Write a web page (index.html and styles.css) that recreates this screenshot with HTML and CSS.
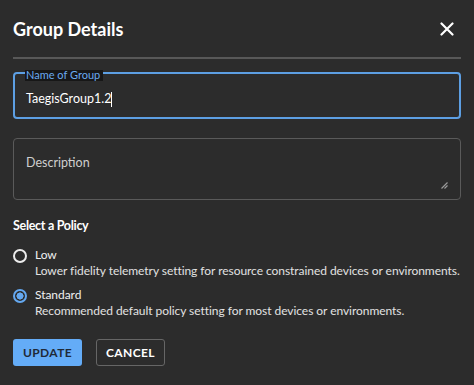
FILE: index.html
```html
<!DOCTYPE html>
<html lang="en">
<head>
    <meta charset="UTF-8">
    <meta name="viewport" content="width=device-width, initial-scale=1.0">
    <title>Group Details</title>
    <link rel="stylesheet" href="styles.css">
</head>
<body>
    <div class="dialog">
        <div class="dialog-header">
            <h2>Group Details</h2>
            <button class="close-button" aria-label="Close">
                <svg width="14" height="14" viewBox="0 0 14 14"><path d="M1.5 1.5 L12.5 12.5 M12.5 1.5 L1.5 12.5" stroke="#fff" stroke-width="2.2" stroke-linecap="round"/></svg>
            </button>
        </div>
        <hr class="divider">

        <div class="field field-focused">
            <span class="field-label">Name of Group</span>
            <div class="field-value">TaegisGroup1.2<span class="caret"></span></div>
        </div>

        <div class="field field-area">
            <span class="placeholder">Description</span>
            <svg class="resize" width="7" height="7" viewBox="0 0 7 7"><path d="M0.5 6.5 L6.5 0.5 M3.5 6.5 L6.5 3.5" stroke="#9a9a9a" stroke-width="1.2"/></svg>
        </div>

        <h3>Select a Policy</h3>
        <label class="option">
            <span class="radio"></span>
            <span class="option-text">
                <span class="option-title">Low</span>
                <span class="option-desc">Lower fidelity telemetry setting for resource constrained devices or environments.</span>
            </span>
        </label>
        <label class="option">
            <span class="radio radio-checked"></span>
            <span class="option-text">
                <span class="option-title">Standard</span>
                <span class="option-desc">Recommended default policy setting for most devices or environments.</span>
            </span>
        </label>

        <div class="actions">
            <button class="btn btn-primary">UPDATE</button>
            <button class="btn btn-outline">CANCEL</button>
        </div>
    </div>
</body>
</html>
```

FILE: styles.css
```css
body {
    margin: 0;
    background-color: #2c2c2c;
    font-family: Lato, "Noto Sans", sans-serif;
    color: #e6e6e6;
    overflow: hidden;
}
.dialog {
    padding: 0 13px;
}
.dialog-header {
    display: flex;
    align-items: center;
    justify-content: space-between;
    height: 57px;
}
.dialog-header h2 {
    margin: 0;
    font-size: 18px;
    font-weight: 700;
    color: #fff;
}
.close-button {
    background: none;
    border: none;
    padding: 0;
    margin-right: 7px;
    display: flex;
    cursor: pointer;
}
.divider {
    margin: 0;
    border: none;
    border-top: 2px solid #585858;
}
.field {
    position: relative;
    border: 1px solid #5a5a5a;
    border-radius: 4px;
    box-sizing: border-box;
}
.field-focused {
    margin-top: 13px;
    height: 47px;
    border: 2px solid #5d9fe3;
    padding: 17px 11px 0;
}
.field-label {
    position: absolute;
    top: -4px;
    left: 10px;
    font-size: 11px;
    line-height: 10px;
    color: #6aaaf0;
    background-color: #171717;
    padding: 0 3px 1px 1px;
}
.field-value {
    font-size: 12.5px;
    line-height: 16px;
    color: #fff;
    display: flex;
    align-items: center;
}
.caret {
    display: inline-block;
    width: 1px;
    height: 15px;
    background-color: #fff;
}
.field-area {
    margin-top: 19px;
    height: 62px;
    padding: 12px 12px 0;
}
.placeholder {
    font-size: 12.5px;
    line-height: 16px;
    color: #cfcfcf;
}
.resize {
    position: absolute;
    right: 12px;
    bottom: 10px;
}
h3 {
    margin: 18px 0 13px;
    font-size: 12.5px;
    line-height: 16px;
    font-weight: 700;
    color: #fff;
    letter-spacing: -0.3px;
}
.option {
    display: flex;
    gap: 8px;
    margin-bottom: 8px;
    cursor: pointer;
}
.radio {
    width: 14px;
    height: 14px;
    box-sizing: border-box;
    border: 2px solid #ececec;
    border-radius: 50%;
    margin-top: 2px;
    flex-shrink: 0;
}
.radio-checked {
    border-color: #64a8f0;
    background: radial-gradient(circle, #64a8f0 0 3.3px, transparent 3.8px);
}
.option-text {
    display: flex;
    flex-direction: column;
    font-size: 12px;
    line-height: 16px;
    letter-spacing: -0.05px;
    white-space: nowrap;
}
.option-title {
    color: #f0f0f0;
}
.option-desc {
    color: #e2e2e2;
}
.actions {
    display: flex;
    gap: 14px;
    margin-top: 20px;
}
.btn {
    font-family: Lato, "Noto Sans", sans-serif;
    font-size: 12px;
    font-weight: 700;
    letter-spacing: 0.4px;
    height: 27px;
    width: 69px;
    border-radius: 3px;
    cursor: pointer;
    padding: 0;
}
.btn-primary {
    background-color: #64acf7;
    color: #1f2a38;
    border: none;
}
.btn-outline {
    background: transparent;
    color: #fff;
    border: 1px solid #666;
}
```
